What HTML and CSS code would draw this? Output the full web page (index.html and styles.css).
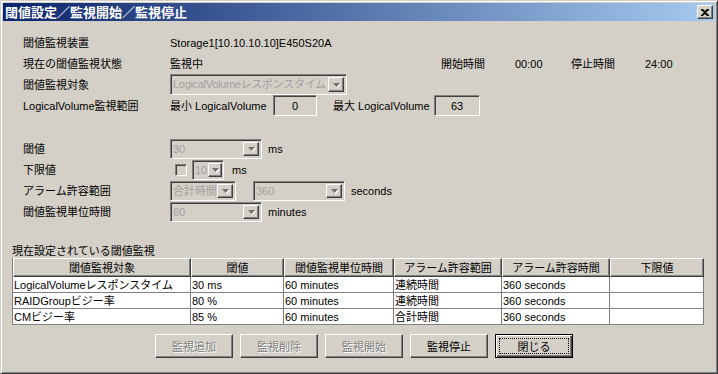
FILE: index.html
```html
<!DOCTYPE html>
<html lang="ja">
<head>
    <meta charset="UTF-8">
    <title>閾値設定／監視開始／監視停止</title>
    <link rel="stylesheet" href="styles.css">
</head>
<body>
    <div class="window">
        <div class="titlebar">
            <span class="title">閾値設定／監視開始／監視停止</span>
            <span class="close-btn">
                <svg width="8" height="7" viewBox="0 0 8 7"><path d="M0 0h2l2 2 2-2h2v1L5 3.5 8 6v1H6L4 5 2 7H0V6l3-2.5L0 1z" fill="#000"/></svg>
            </span>
        </div>

        <div class="form form-top">
            <div class="label">閾値監視装置</div>
            <div class="field">Storage1[10.10.10.10]E450S20A</div>

            <div class="label">現在の閾値監視状態</div>
            <div class="field">
                <span class="state">監視中</span>
                <span class="time-label">開始時間</span>
                <span class="time-value">00:00</span>
                <span class="time-label">停止時間</span>
                <span>24:00</span>
            </div>

            <div class="label">閾値監視対象</div>
            <div class="field">
                <div class="combo combo-tall w-177"><span class="combo-text tight">LogicalVolumeレスポンスタイム</span><span class="combo-btn"><svg width="9" height="6" viewBox="0 0 9 6"><polygon points="2,2 9,2 5.5,6" fill="#fff"/><polygon points="1,1 8,1 4.5,5" fill="#707070"/></svg></span></div>
            </div>

            <div class="label">LogicalVolume監視範囲</div>
            <div class="field">
                <span class="range-label min-label">最小 LogicalVolume</span>
                <span class="num-box w-44">0</span>
                <span class="range-label max-label">最大 LogicalVolume</span>
                <span class="num-box w-46">63</span>
            </div>
        </div>

        <div class="form form-bottom">
            <div class="label">閾値</div>
            <div class="field">
                <div class="combo w-92"><span class="combo-text">30</span><span class="combo-btn"><svg width="9" height="6" viewBox="0 0 9 6"><polygon points="2,2 9,2 5.5,6" fill="#fff"/><polygon points="1,1 8,1 4.5,5" fill="#707070"/></svg></span></div>
                <span class="unit">ms</span>
            </div>

            <div class="label">下限値</div>
            <div class="field">
                <span class="checkbox"></span>
                <div class="combo w-32 small-combo"><span class="combo-text">10</span><span class="combo-btn"><svg width="9" height="6" viewBox="0 0 9 6"><polygon points="2,2 9,2 5.5,6" fill="#fff"/><polygon points="1,1 8,1 4.5,5" fill="#707070"/></svg></span></div>
                <span class="unit unit-wide">ms</span>
            </div>

            <div class="label">アラーム許容範囲</div>
            <div class="field">
                <div class="combo w-66"><span class="combo-text">合計時間</span><span class="combo-btn"><svg width="9" height="6" viewBox="0 0 9 6"><polygon points="2,2 9,2 5.5,6" fill="#fff"/><polygon points="1,1 8,1 4.5,5" fill="#707070"/></svg></span></div>
                <div class="combo w-92 second-combo"><span class="combo-text">360</span><span class="combo-btn"><svg width="9" height="6" viewBox="0 0 9 6"><polygon points="2,2 9,2 5.5,6" fill="#fff"/><polygon points="1,1 8,1 4.5,5" fill="#707070"/></svg></span></div>
                <span class="unit">seconds</span>
            </div>

            <div class="label">閾値監視単位時間</div>
            <div class="field">
                <div class="combo w-92"><span class="combo-text">60</span><span class="combo-btn"><svg width="9" height="6" viewBox="0 0 9 6"><polygon points="2,2 9,2 5.5,6" fill="#fff"/><polygon points="1,1 8,1 4.5,5" fill="#707070"/></svg></span></div>
                <span class="unit">minutes</span>
            </div>
        </div>

        <div class="caption">現在設定されている閾値監視</div>
        <table class="monitor-table">
            <colgroup>
                <col style="width: 178px">
                <col style="width: 93px">
                <col style="width: 110px">
                <col style="width: 108px">
                <col style="width: 108px">
                <col style="width: 94px">
            </colgroup>
            <thead>
                <tr>
                    <th>閾値監視対象</th>
                    <th>閾値</th>
                    <th>閾値監視単位時間</th>
                    <th>アラーム許容範囲</th>
                    <th>アラーム許容時間</th>
                    <th>下限値</th>
                </tr>
            </thead>
            <tbody>
                <tr>
                    <td>LogicalVolumeレスポンスタイム</td>
                    <td>30 ms</td>
                    <td>60 minutes</td>
                    <td>連続時間</td>
                    <td>360 seconds</td>
                    <td></td>
                </tr>
                <tr>
                    <td>RAIDGroupビジー率</td>
                    <td>80 %</td>
                    <td>60 minutes</td>
                    <td>連続時間</td>
                    <td>360 seconds</td>
                    <td></td>
                </tr>
                <tr>
                    <td>CMビジー率</td>
                    <td>85 %</td>
                    <td>60 minutes</td>
                    <td>合計時間</td>
                    <td>360 seconds</td>
                    <td></td>
                </tr>
            </tbody>
        </table>

        <div class="buttons">
            <button type="button" class="btn" disabled>監視追加</button>
            <button type="button" class="btn" disabled>監視削除</button>
            <button type="button" class="btn" disabled>監視開始</button>
            <button type="button" class="btn">監視停止</button>
            <button type="button" class="btn btn-default"><span class="focus">閉じる</span></button>
        </div>
    </div>
</body>
</html>
```

FILE: styles.css
```css
* {
    box-sizing: border-box;
}

body {
    margin: 0;
    font-family: "Liberation Sans", "Noto Sans CJK JP", sans-serif;
    font-size: 11px;
    color: #000;
    background: #D4D0C8;
}

.window {
    width: 718px;
    height: 374px;
    background: #D4D0C8;
    border: 1px solid;
    border-color: #D4D0C8 #404040 #404040 #D4D0C8;
    box-shadow: inset 1px 1px #fff, inset -1px -1px #808080;
    padding: 2px;
}

.titlebar {
    height: 18px;
    display: flex;
    align-items: center;
    justify-content: space-between;
    padding: 0 2px 0 2px;
    background: linear-gradient(to right, #0A246A, #A6CAF0);
}

.title {
    color: #fff;
    font-family: "Noto Sans CJK JP", sans-serif;
    font-weight: bold;
    font-size: 13px;
    line-height: 18px;
}

.close-btn {
    width: 16px;
    height: 14px;
    display: flex;
    align-items: center;
    justify-content: center;
    background: #D4D0C8;
    border: 1px solid;
    border-color: #fff #404040 #404040 #fff;
    box-shadow: inset -1px -1px #808080;
}

/* form rows */
.form {
    display: grid;
    grid-template-columns: 147px auto;
    align-items: center;
    margin-left: 20px;
    line-height: 14px;
}

.form-top {
    margin-top: 12px;
    grid-template-rows: 20px 21px 21px 21px;
}

.form-bottom {
    margin-top: 22px;
    grid-auto-rows: 21px;
}

.field {
    display: flex;
    align-items: center;
    white-space: nowrap;
}

.state {
    width: 271px;
}

.time-label {
    width: 74px;
}

.time-value {
    width: 56px;
}

.range-label.min-label {
    width: 103px;
}

.range-label.max-label {
    width: 101px;
    margin-left: 16px;
}

.num-box {
    height: 21px;
    display: flex;
    align-items: center;
    justify-content: center;
    border: 1px solid;
    border-color: #808080 #fff #fff #808080;
    box-shadow: inset 1px 1px #404040, inset -1px -1px #D4D0C8;
}

.w-44 { width: 44px; }
.w-46 { width: 46px; }
.w-32 { width: 32px; }
.w-66 { width: 66px; }
.w-92 { width: 92px; }
.w-177 { width: 177px; }

/* disabled combo box */
.combo {
    height: 20px;
    display: flex;
    padding: 2px;
    background: #D4D0C8;
    border: 1px solid;
    border-color: #808080 #fff #fff #808080;
    box-shadow: inset 1px 1px #404040, inset -1px -1px #D4D0C8;
}

.combo-tall {
    height: 21px;
}

.combo-text {
    flex: 1;
    overflow: hidden;
    color: #A0A0A0;
    line-height: 14px;
}

.combo-text.tight {
    letter-spacing: -0.3px;
}

.combo-btn {
    width: 16px;
    display: flex;
    align-items: center;
    justify-content: center;
    border: 1px solid;
    border-color: #fff #404040 #404040 #fff;
    box-shadow: inset -1px -1px #808080;
}

.small-combo {
    margin-left: 5px;
    padding: 2px 1px 2px 2px;
}

.small-combo .combo-btn {
    width: 14px;
}

.second-combo {
    margin-left: 17px;
}

.unit {
    margin-left: 6px;
}

.unit.unit-wide {
    margin-left: 8px;
}

.checkbox {
    width: 12px;
    height: 12px;
    margin-left: 5px;
    background: #D4D0C8;
    border: 1px solid;
    border-color: #808080 #fff #fff #808080;
    box-shadow: inset 1px 1px #404040, inset -1px -1px #D4D0C8;
}

/* table */
.caption {
    margin-top: 22px;
    margin-left: 9px;
    height: 14px;
    line-height: 14px;
}

.monitor-table {
    margin-left: 9px;
    width: 691px;
    table-layout: fixed;
    border-collapse: separate;
    border-spacing: 0;
    border-left: 1px solid #808080;
}

.monitor-table th {
    height: 19px;
    padding: 0;
    font-weight: normal;
    text-align: center;
    background: #D4D0C8;
    border: 1px solid;
    border-color: #fff #404040 #404040 #fff;
    box-shadow: inset -1px -1px #808080;
    line-height: 14px;
}

.monitor-table tbody tr {
    height: 16px;
}

.monitor-table td {
    padding: 0 0 0 1px;
    background: #fff;
    border-right: 1px solid #808080;
    border-bottom: 1px solid #808080;
    line-height: 14px;
    white-space: nowrap;
    overflow: hidden;
}

/* buttons */
.buttons {
    display: flex;
    gap: 7px;
    margin-top: 9px;
    padding-left: 152px;
}

.btn {
    width: 78px;
    height: 24px;
    padding: 0;
    font-family: "Liberation Sans", "Noto Sans CJK JP", sans-serif;
    font-size: 11px;
    color: #000;
    background: #D4D0C8;
    border: 1px solid;
    border-color: #fff #404040 #404040 #fff;
    box-shadow: inset -1px -1px #808080;
}

.btn:disabled {
    color: #808080;
    text-shadow: 1px 1px #fff;
}

.btn-default {
    border: 1px solid #000;
    box-shadow: inset 1px 1px #fff, inset -1px -1px #404040, inset -2px -2px #808080;
    padding: 3px;
}

.focus {
    display: flex;
    align-items: center;
    justify-content: center;
    height: 100%;
    border: 1px dotted #000;
}
```
